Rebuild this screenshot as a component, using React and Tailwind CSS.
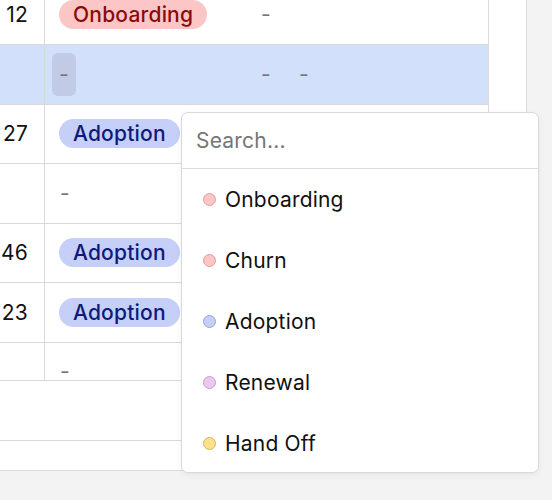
import React from 'react';

const rows = [
  { num: '12', tag: 'Onboarding', c3: '-', c4: '' },
  { num: '', tag: 'button', c3: '-', c4: '-', selected: true },
  { num: '27', tag: 'Adoption', c3: '', c4: '' },
  { num: '', tag: '', c3: '', c4: '' },
  { num: '46', tag: 'Adoption', c3: '', c4: '' },
  { num: '23', tag: 'Adoption', c3: '', c4: '' },
  { num: '', tag: '', c3: '', c4: '' },
];

const tagStyles = {
  Onboarding: 'bg-[#fcc6c6] text-[#8a0b0b]',
  Adoption: 'bg-[#c6cff8] text-[#0c1a7c]',
};

const options = [
  { label: 'Onboarding', dot: 'bg-[#fcc6c6] border-[#e29c9c]' },
  { label: 'Churn', dot: 'bg-[#fcc6c6] border-[#e29c9c]' },
  { label: 'Adoption', dot: 'bg-[#c6cff8] border-[#97a5de]' },
  { label: 'Renewal', dot: 'bg-[#ebc9ef] border-[#c99dd0]' },
  { label: 'Hand Off', dot: 'bg-[#fde08b] border-[#d6b65a]' },
];

const Dash = () => <span className="text-[#777]">-</span>;

const TagCell = ({ tag }) => {
  if (tag === 'button') {
    return (
      <div className="ml-[7px] w-[24px] h-[43px] rounded-[6px] bg-[#c1cbe5] flex items-center justify-center">
        <Dash />
      </div>
    );
  }
  if (!tag) {
    return (
      <div className="pl-[15px]">
        <Dash />
      </div>
    );
  }
  return (
    <div className="pl-[14px]">
      <span
        className={`inline-flex items-center h-[29px] px-[14px] rounded-full font-medium ${tagStyles[tag]}`}
      >
        {tag}
      </span>
    </div>
  );
};

const App = () => {
  return (
    <div className="relative min-h-screen bg-[#f3f3f3] font-['Inter',sans-serif] text-[21px] tracking-[0.2px] text-[#111] overflow-hidden">
      <div className="w-[527px] h-[471px] bg-white border-r border-b border-[#dcdcdc] flex flex-col">
        <div className="w-[489px] h-[381px] shrink-0 overflow-hidden border-b border-r border-[#d9d9d9]">
          <div className="-mt-[14.5px]">
            {rows.map((r, i) => (
              <div
                key={i}
                className={`flex items-stretch h-[59.5px] border-b border-[#d9d9d9] ${
                  r.selected ? 'bg-[#d3e0fb]' : ''
                }`}
              >
                <div className="w-[45px] shrink-0 border-r border-[#d9d9d9] flex items-center justify-end pr-4">
                  {r.num}
                </div>
                <div className="w-[202px] shrink-0 flex items-center">
                  <TagCell tag={r.tag} />
                </div>
                <div className="w-[38px] shrink-0 flex items-center pl-[14px]">
                  {r.c3 && <Dash />}
                </div>
                <div className="flex-1 flex items-center pl-[14px]">
                  {r.c4 && <Dash />}
                </div>
              </div>
            ))}
          </div>
        </div>
        <div className="h-[60px] shrink-0 border-b border-[#d9d9d9]" />
      </div>

      <div className="absolute left-[181px] top-[112px] w-[358px] h-[361px] overflow-hidden bg-white rounded-[7px] border border-[#d9d9d9] shadow-[0_2px_6px_rgba(0,0,0,0.06)]">
        <div className="h-[56px] flex items-center px-[14px] border-b border-[#dcdcdc]">
          <span className="text-[#767676]">Search...</span>
        </div>
        <div>
          {options.map((o) => (
            <div key={o.label} className="h-[61px] flex items-center gap-[9px] pl-[21px]">
              <span className={`w-[13px] h-[13px] shrink-0 rounded-full border ${o.dot}`} />
              <span>{o.label}</span>
            </div>
          ))}
        </div>
      </div>
    </div>
  );
};

export default App;
